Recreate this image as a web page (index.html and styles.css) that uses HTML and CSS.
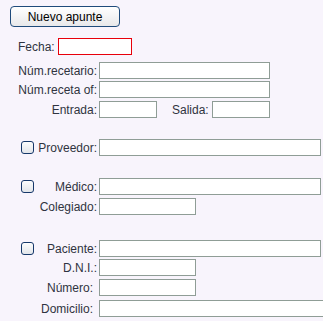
FILE: index.html
```html
<!DOCTYPE html>
<html lang="es">
<head>
  <meta charset="UTF-8">
  <meta name="viewport" content="width=device-width, initial-scale=1.0">
  <title>Apunte</title>
  <link rel="stylesheet" href="styles.css">
</head>
<body>
  <div class="form">
    <button class="btn" type="button">Nuevo apunte</button>

    <!-- fecha -->
    <div class="fecha-row">
      <span class="fecha-lbl">Fecha:</span>
      <input type="text" class="fld fecha" autofocus>
    </div>

    <!-- receta -->
    <div class="row mt7">
      <span class="lbl">Núm.recetario:</span>
      <input type="text" class="fld w-md">
    </div>
    <div class="row mt2">
      <span class="lbl">Núm.receta of:</span>
      <input type="text" class="fld w-md">
    </div>
    <div class="row mt3">
      <span class="lbl">Entrada:</span>
      <input type="text" class="fld w-xs">
      <span class="salida-lbl">Salida:</span>
      <input type="text" class="fld w-xs">
    </div>

    <!-- proveedor -->
    <div class="row mt21">
      <span class="lbl"><span class="chk"></span>Proveedor:</span>
      <input type="text" class="fld w-lg">
    </div>

    <!-- medico -->
    <div class="row mt22">
      <span class="lbl"><span class="chk"></span>Médico:</span>
      <input type="text" class="fld w-lg">
    </div>
    <div class="row mt3">
      <span class="lbl">Colegiado:</span>
      <input type="text" class="fld w-sm">
    </div>

    <!-- paciente -->
    <div class="row mt25">
      <span class="lbl"><span class="chk"></span>Paciente:</span>
      <input type="text" class="fld w-lg">
    </div>
    <div class="row mt2">
      <span class="lbl">D.N.I.:</span>
      <input type="text" class="fld w-sm">
    </div>
    <div class="row mt3">
      <span class="lbl sp">Número:</span>
      <input type="text" class="fld w-sm">
    </div>
    <div class="row mt4">
      <span class="lbl sp">Domicilio:</span>
      <input type="text" class="fld w-xl">
    </div>
  </div>
</body>
</html>
```

FILE: styles.css
```css
* {
  box-sizing: border-box;
}
body {
  margin: 0;
  padding: 0;
  background: #f8f4fc;
  font-family: 'Liberation Sans', Arial, sans-serif;
  font-size: 12px;
  color: #2f3340;
  overflow: hidden;
}
.form {
  display: flex;
  flex-direction: column;
  align-items: flex-start;
  padding-top: 6px;
  width: 323px;
  height: 321px;
  overflow: hidden;
}
.btn {
  margin-left: 10px;
  width: 110px;
  height: 21px;
  padding: 0;
  border: 1px solid #1f4b7b;
  border-radius: 4px;
  background: linear-gradient(#ffffff, #e8e8ea);
  font-family: inherit;
  font-size: 12px;
  color: #000;
}
.fecha-row {
  display: flex;
  align-items: center;
  margin-top: 11px;
  padding-left: 18px;
  height: 17px;
}
.fecha-lbl {
  margin-right: 3px;
}
.fld {
  height: 17px;
  border: 1px solid #8f9d96;
  background: #fff;
  padding: 0 2px;
  font-family: inherit;
  font-size: 12px;
  outline: none;
  flex-shrink: 0;
}
.fecha {
  width: 74px;
  border-color: #e8000b;
  caret-color: #000;
}
.row {
  display: flex;
  align-items: center;
  height: 17px;
}
.lbl {
  display: flex;
  align-items: center;
  justify-content: flex-end;
  width: 97px;
  margin-right: 2px;
  padding-left: 21px;
  white-space: nowrap;
}
.lbl.sp {
  padding-right: 4px;
}
.chk {
  width: 13px;
  height: 13px;
  margin-right: auto;
  border: 1.5px solid #16386a;
  border-radius: 3px;
  background: linear-gradient(#fdfdfd, #e2e5ea);
}
.salida-lbl {
  margin-left: 15px;
  margin-right: 3px;
}
.w-xs { width: 58px; }
.w-sm { width: 97px; }
.w-md { width: 171px; }
.w-lg { width: 222px; }
.w-xl { width: 240px; }
.mt2 { margin-top: 2px; }
.mt3 { margin-top: 3px; }
.mt4 { margin-top: 4px; }
.mt7 { margin-top: 7px; }
.mt21 { margin-top: 21px; }
.mt22 { margin-top: 22px; }
.mt25 { margin-top: 25px; }
```
